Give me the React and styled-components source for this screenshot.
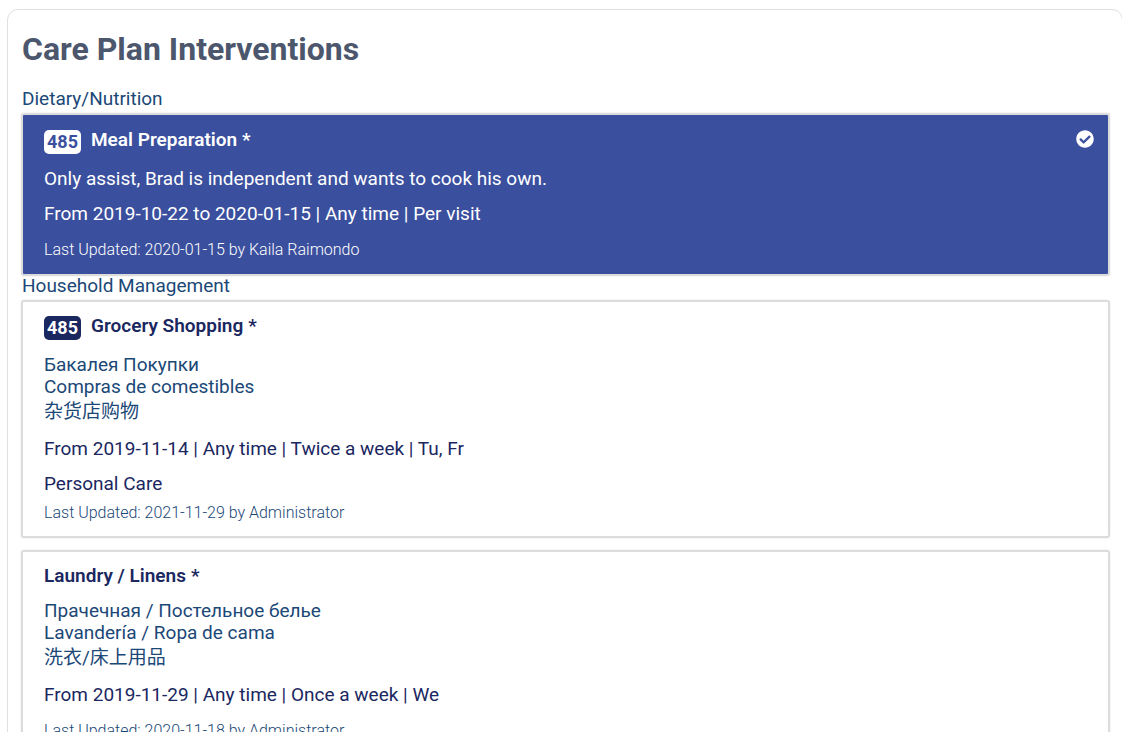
import React from "react";
import styled, { createGlobalStyle } from "styled-components";
import { FaCheckCircle } from "react-icons/fa";

const GlobalStyle = createGlobalStyle`
  *, *::before, *::after { box-sizing: border-box; }
  html { scrollbar-width: none; }
  body {
    margin: 0;
    background: #fff;
    overflow-x: hidden;
    font-family: Roboto, "Noto Sans CJK SC", sans-serif;
    font-size: 19px;
    line-height: 22px;
    color: #1b4877;
  }
  h1, h2, h3, p { margin: 0; }
`;

const Panel = styled.main`
  margin: 9px -1px 0 7px;
  padding: 19px 12px 16px 13px;
  border: 1px solid #dfdfdf;
  border-radius: 11px;
`;

const PageTitle = styled.h1`
  margin-bottom: 20px;
  padding-left: 1px;
  font-size: 32px;
  font-weight: 700;
  line-height: 40px;
  color: #4c566c;
`;

const GroupTitle = styled.h2`
  padding: 0 0 4px 1px;
  font-size: 19px;
  font-weight: 400;
  line-height: 20px;
`;

const Group = styled.section`
  display: flex;
  flex-direction: column;
`;

const CardList = styled.div`
  display: flex;
  flex-direction: column;
  gap: 12px;
`;

const Card = styled.article`
  display: flex;
  flex-direction: column;
  gap: 13px;
  padding: ${(p) => (p.$selected ? 14 : 13)}px 14px ${(p) => (p.$selected ? 14 : 13)}px 21px;
  border: 2px solid #dcdcdc;
  border-radius: 3px;
  box-shadow: 0 0 2px rgba(0, 0, 0, 0.12);
  background: ${(p) => (p.$selected ? "#3a4f9e" : "#fff")};
  color: ${(p) => (p.$selected ? "#fff" : "#1b275f")};
`;

const CardHeader = styled.header`
  display: flex;
  align-items: flex-start;
`;

const Badge = styled.span`
  margin: 1px 10px 1px 0;
  padding: 0 3px;
  border-radius: 5px;
  font-size: 18px;
  font-weight: 700;
  line-height: 24px;
  background: ${(p) => (p.$selected ? "#fff" : "#1b275f")};
  color: ${(p) => (p.$selected ? "#3a4f9e" : "#fff")};
`;

const CardTitle = styled.h3`
  flex: 1;
  font-size: 19px;
  font-weight: 600;
  line-height: 22px;
`;

const Star = styled.span`
  margin-left: 5px;
`;

const CheckIcon = styled(FaCheckCircle)`
  flex: none;
  margin-top: 1px;
  font-size: 18px;
`;

const Translations = styled.div`
  color: #1b4877;
`;

const Translation = styled.p`
  line-height: ${(p) => (p.lang === "zh" ? 27 : 22)}px;
`;

const Detail = styled.p`
  font-weight: 400;
`;

const Updated = styled.p`
  margin-top: ${(p) => (p.$tight ? -5 : 2)}px;
  font-size: 16px;
  font-weight: 300;
  line-height: 20px;
  color: ${(p) => (p.$selected ? "#fff" : "#1b4877")};
`;

const groups = [
  {
    name: "Dietary/Nutrition",
    items: [
      {
        title: "Meal Preparation",
        code: "485",
        selected: true,
        details: [
          "Only assist, Brad is independent and wants to cook his own.",
          "From 2019-10-22 to 2020-01-15 | Any time | Per visit",
        ],
        updated: "2020-01-15 by Kaila Raimondo",
      },
    ],
  },
  {
    name: "Household Management",
    items: [
      {
        title: "Grocery Shopping",
        code: "485",
        translations: [
          ["ru", "Бакалея Покупки"],
          ["es", "Compras de comestibles"],
          ["zh", "杂货店购物"],
        ],
        details: [
          "From 2019-11-14 | Any time | Twice a week | Tu, Fr",
          "Personal Care",
        ],
        tight: true,
        updated: "2021-11-29 by Administrator",
      },
      {
        title: "Laundry / Linens",
        translations: [
          ["ru", "Прачечная / Постельное белье"],
          ["es", "Lavandería / Ropa de cama"],
          ["zh", "洗衣/床上用品"],
        ],
        details: ["From 2019-11-29 | Any time | Once a week | We"],
        updated: "2020-11-18 by Administrator",
      },
    ],
  },
];

function Intervention({ item }) {
  return (
    <Card $selected={item.selected}>
      <CardHeader>
        {item.code && <Badge $selected={item.selected}>{item.code}</Badge>}
        <CardTitle>
          {item.title}
          <Star>*</Star>
        </CardTitle>
        {item.selected && <CheckIcon aria-label="Selected" />}
      </CardHeader>
      {item.translations && (
        <Translations>
          {item.translations.map(([lang, text]) => (
            <Translation key={lang} lang={lang}>
              {text}
            </Translation>
          ))}
        </Translations>
      )}
      {item.details.map((text) => (
        <Detail key={text}>{text}</Detail>
      ))}
      <Updated $selected={item.selected} $tight={item.tight}>
        Last Updated: {item.updated}
      </Updated>
    </Card>
  );
}

export default function App() {
  return (
    <>
      <GlobalStyle />
      <Panel>
        <PageTitle>Care Plan Interventions</PageTitle>
        {groups.map((group) => (
          <Group key={group.name}>
            <GroupTitle>{group.name}</GroupTitle>
            <CardList>
              {group.items.map((item) => (
                <Intervention key={item.title} item={item} />
              ))}
            </CardList>
          </Group>
        ))}
      </Panel>
    </>
  );
}
